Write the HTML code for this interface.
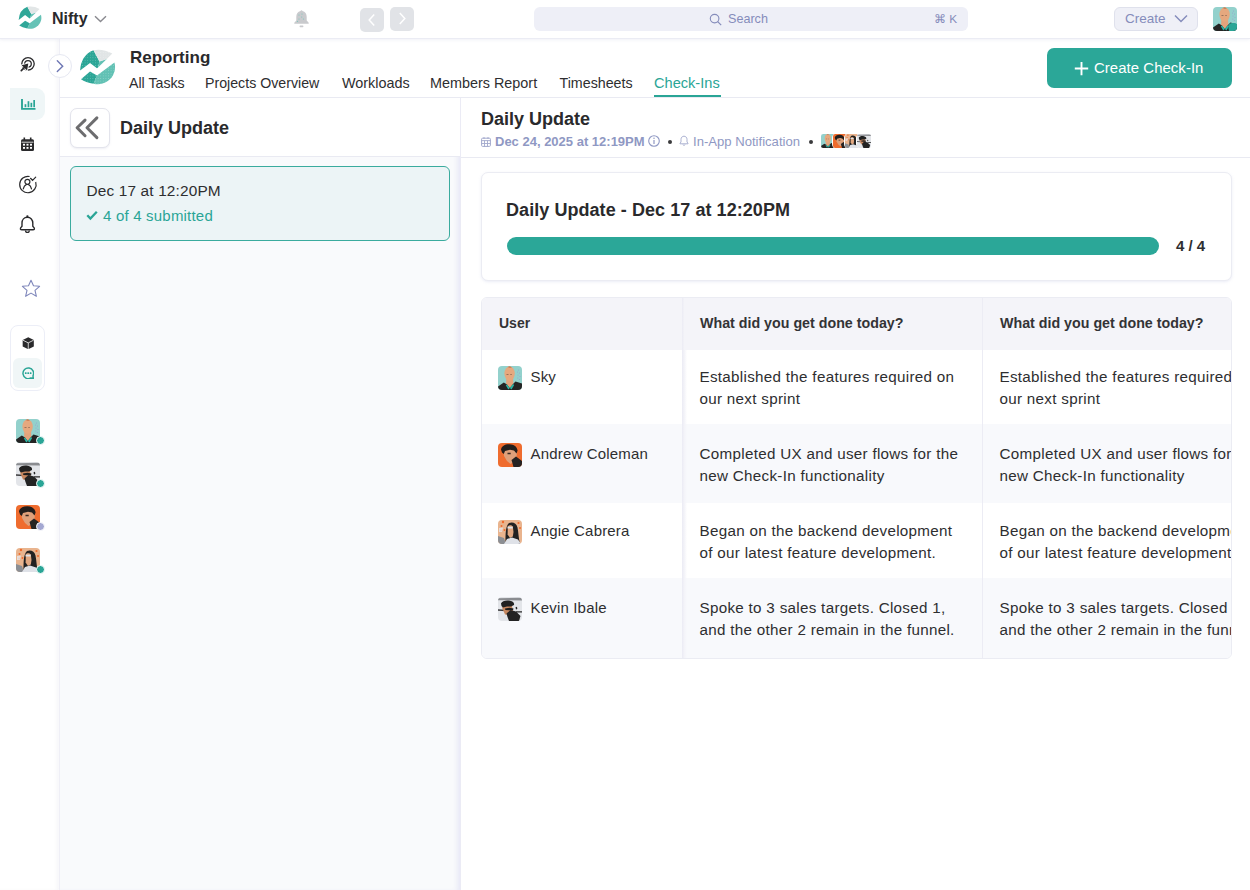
<!DOCTYPE html>
<html><head><meta charset="utf-8">
<style>
*{box-sizing:border-box;margin:0;padding:0}
html,body{width:1250px;height:890px;overflow:hidden;background:#fff;font-family:"Liberation Sans",sans-serif;color:#2e2e30}
.a{position:absolute}
.t{position:absolute;white-space:nowrap;line-height:1}
#top{left:0;top:0;width:1250px;height:39px;background:#fff;border-bottom:1px solid #ebecf4;box-shadow:0 1px 3px rgba(228,229,240,.55);z-index:4}
#side{left:0;top:39px;width:60px;height:851px;background:#fff;border-right:1px solid #efeff6;box-shadow:inset -3px 0 3px rgba(235,235,240,.35)}
#rephdr{left:60px;top:39px;width:1190px;height:59px;background:#fff;border-bottom:1px solid #e9eaf2}
#lp{left:60px;top:98px;width:401px;height:792px;background:#f9fafc;border-right:1px solid #ebebf5;box-shadow:inset -5px 0 4px -2px rgba(232,232,246,.9)}
#lph{left:0;top:0;width:400px;height:59px;background:#fff;border-bottom:1px solid #e9eaf2}
#rp{left:461px;top:98px;width:789px;height:792px;background:#fff}
#rph{left:0;top:0;width:789px;height:60px;border-bottom:1px solid #e9eaf2}
</style></head><body>

<svg width="0" height="0" style="position:absolute">
<defs>
<clipPath id="lc"><circle cx="21.4" cy="20.9" r="17.2"/></clipPath>
<pattern id="ldots" width="2.6" height="2.6" patternUnits="userSpaceOnUse"><circle cx="1.3" cy="1.3" r=".45" fill="#fff" opacity=".35"/></pattern>
<g id="logo">
<path d="M21 29.6L38.4 16.4A17.2 17.2 0 0 1 17.6 37.7Z" fill="#62c1b4"/>
<path d="M5 33.2L14 25.6L21 29.6L17.5 37.7Q9.5 36.5 5 33.2Z" fill="#2ba596"/>
<path d="M4.1 24.6Q5 9 17.5 4.2L23.5 15.5L22 21.6L21 22.2L14 16.9Z" fill="#2ba596"/>
<path d="M23.5 15.5L30.8 12.9L22 21.6Z" fill="#62c1b4"/>
<path d="M17.5 4.2Q27 2.5 36.3 7.6L30.8 12.9L23.5 15.5Z" fill="#e1e5e6"/>
<path d="M21 29.6L38.4 16.4A17.2 17.2 0 0 1 17.6 37.7Z M5 33.2L14 25.6L21 29.6L17.5 37.7Q9.5 36.5 5 33.2Z M4.1 24.6Q5 9 17.5 4.2L23.5 15.5L22 21.6L21 22.2L14 16.9Z M17.5 4.2Q27 2.5 36.3 7.6L30.8 12.9L23.5 15.5Z" fill="url(#ldots)"/>
</g>
<clipPath id="avc"><rect width="24" height="24" rx="4"/></clipPath>
<g id="av1"><g clip-path="url(#avc)"><rect width="24" height="24" fill="#93d1cc"/>
<g fill="#9d8fd0" opacity=".8"><circle cx="20.5" cy="4" r=".5"/><circle cx="19.5" cy="6" r=".5"/><circle cx="21.5" cy="7" r=".5"/><circle cx="20" cy="9" r=".5"/><circle cx="22" cy="10.5" r=".5"/><circle cx="19.8" cy="12" r=".5"/><circle cx="21.4" cy="13.5" r=".5"/></g>
<path d="M8.3 12.5H15L15.5 19.5L11.8 22L8 19.5Z" fill="#e3a37c"/>
<ellipse cx="11.6" cy="7.6" rx="5.2" ry="7.2" fill="#e6a87e"/>
<path d="M9.5 1L11.6 .3L14 1.2L12 2Z" fill="#c97a52"/>
<path d="M0 20.5L5.8 16.5L9 18.5L11.8 22L15 18L17.5 15.4L24 17.4V24H0Z" fill="#242424"/>
<path d="M9 18.5L11.8 22L10.3 23.5L7.8 19.3Z M15 18L11.8 22L13.5 23.5L16.2 19Z" fill="#2bb3a3"/>
<path d="M8.5 8.5h2M12.3 8.5h1.5" stroke="#7a5a48" stroke-width=".7"/>
</g></g>
<g id="av2"><g clip-path="url(#avc)"><rect width="24" height="24" fill="#ef6c2e"/>
<path d="M5.5 7.5L12 5.8L19 8.5L18.5 15L15 19.5L12.5 21L9 18L6 13Z" fill="#dea07a"/>
<path d="M3 6.5C3.5 3 7 1 11.5 1.2C16 1.4 19 3.5 19.6 7.5L18.5 10.5L16 7.5L12 6.8L7 8L5.8 11L4 9.5Z" fill="#221e1c"/>
<path d="M9.5 9.8h3.2v1.4h-3.2z" fill="#3a2a22"/>
<path d="M13.5 17L18 13.5L24 18V24H15.5Z" fill="#262322"/>
</g></g>
<g id="av3"><g clip-path="url(#avc)"><rect width="24" height="24" fill="#e9b48e"/>
<g fill="#ef6a2c"><circle cx="5" cy="2" r="1.2"/><circle cx="3.5" cy="6" r="1"/><circle cx="6.5" cy="10" r="1"/><circle cx="20.5" cy="3" r="1.1"/><circle cx="22" cy="8" r="1"/><circle cx="3" cy="10.5" r="1"/></g>
<path d="M0 16L6 18L8 24H0Z" fill="#8c8f94"/>
<path d="M1 8L5 7.5L4 12L1 12Z" fill="#e6e9ee" opacity=".8"/>
<path d="M7.5 24C7.5 16 7.3 6 11 3C14.5 1.5 18.5 3 19.5 7.5C20.5 12 20.5 18 22 24Z" fill="#222"/>
<path d="M9.8 6.5C10.5 4.8 13.5 4.6 14.8 6.4L15.5 12L14.8 16.5L12 18L9.6 14.5Z" fill="#e2a881"/>
<path d="M9.5 6.8L14.8 6.7L14.6 8.6L9.6 8.5Z" fill="#dfe3ea"/>
<path d="M6 24L9 19L14 17.5L20 19.5L23 24Z" fill="#dfe2e8"/>
</g></g>
<g id="av4"><g clip-path="url(#avc)"><rect width="24" height="24" fill="#e3e5e9"/>
<path d="M0 1.2L24 .8V3.5L0 3.2Z" fill="#8a8c90"/>
<path d="M0 12.3L8 12.8L8 14.3L0 13.8Z" fill="#3a3a3c"/>
<path d="M18 14.3L24 14.3V15.6L18 15.6Z" fill="#2a2a2a"/>
<path d="M4 10.5L9 8L14 9L15 14L12 18L7 17.5Z" fill="#c6875f"/>
<path d="M3 6.5C4 4 8 3 12 3.8C15 4.5 16.5 6 16 8L13 9.5L9 9.5L5 10.5L3.5 9Z" fill="#212121"/>
<path d="M7 11.6L11.5 10.8L15.5 11.5L15 13.2L11 13.3L7.3 13Z" fill="#1d1d1d"/>
<path d="M8.5 16.5L12.5 13L18 14.5L22.5 19L21 24H11L9.5 20Z" fill="#232323"/>
<path d="M17.5 10.2L19 9.8L19.3 12L18 12.5Z" fill="#262626"/>
</g></g>
</defs></svg>
<!-- TOP BAR -->
<div id="top" class="a">
  <svg class="a" style="left:15.6px;top:4.4px" width="28.6" height="27.3" viewBox="0 0 44 42"><use href="#logo"/></svg>
  <div class="t" style="left:52px;top:11px;font-size:16px;font-weight:bold;color:#2a2a2c">Nifty</div>
  <svg class="a" style="left:94px;top:15px" width="13" height="8" viewBox="0 0 13 8"><path d="M1 1.2L6.5 6.6L12 1.2" fill="none" stroke="#8a8a90" stroke-width="1.4"/></svg>
  <svg class="a" style="left:293px;top:9px" width="17" height="19" viewBox="0 0 17 19"><path d="M8.5 1.2c.6 0 .9.4.9.9 2.8.5 4.3 3 4.3 5.8v3.6l2 2.3v1H1.3v-1l2-2.3V7.9c0-2.8 1.5-5.3 4.3-5.8 0-.5.3-.9.9-.9z" fill="#c9cacd"/><rect x="6.6" y="16.6" width="3.8" height="1.6" rx=".6" fill="#c9cacd"/><g fill="#7cc6bd"><circle cx="6" cy="6" r=".6"/><circle cx="9" cy="5" r=".6"/><circle cx="8.7" cy="8" r=".6"/><circle cx="6" cy="10" r=".6"/><circle cx="10.5" cy="10" r=".6"/><circle cx="4.5" cy="12.3" r=".6"/></g></svg>
  <div class="a" style="left:360px;top:8px;width:24px;height:24px;border-radius:5px;background:#e1e3e7"></div>
  <svg class="a" style="left:360px;top:8px" width="24" height="24" viewBox="0 0 24 24"><path d="M14.2 6.6L9.2 12L14.2 17.4" fill="none" stroke="#fff" stroke-width="1.5"/></svg>
  <div class="a" style="left:390px;top:7px;width:24px;height:24px;border-radius:5px;background:#e1e3e7"></div>
  <svg class="a" style="left:390px;top:7px" width="24" height="24" viewBox="0 0 24 24"><path d="M9.8 6.1L14.8 11.5L9.8 16.9" fill="none" stroke="#fff" stroke-width="1.5"/></svg>
  <div class="a" style="left:534px;top:7px;width:434px;height:24px;border-radius:6px;background:#eeeff7"></div>
  <svg class="a" style="left:709px;top:12.5px" width="14" height="14" viewBox="0 0 14 14"><circle cx="5.6" cy="5.6" r="4.3" fill="none" stroke="#858cbb" stroke-width="1.15"/><path d="M8.7 8.7L12.2 12.2" stroke="#858cbb" stroke-width="1.2"/></svg>
  <div class="t" style="left:728px;top:13px;font-size:12.6px;color:#858cbb">Search</div>
  <div class="t" style="left:934px;top:13.5px;font-size:11.8px;color:#858cbb">&#8984; K</div>
  <div class="a" style="left:1114px;top:7px;width:84px;height:24px;border-radius:6px;background:#eff0f7;border:1px solid #dfe1ec"></div>
  <div class="t" style="left:1125px;top:12px;font-size:13.5px;color:#858cbb">Create</div>
  <svg class="a" style="left:1174px;top:14px" width="14" height="9" viewBox="0 0 14 9"><path d="M1 1.5L7 7.5L13 1.5" fill="none" stroke="#858cbb" stroke-width="1.5"/></svg>
  <svg class="a" style="left:1213px;top:7px" width="24" height="24" viewBox="0 0 24 24"><use href="#av1"/><g clip-path="url(#avc)"><rect x="15.5" y="16" width="9" height="9" rx="3.5" fill="#2aa596"/></g></svg>
</div>

<!-- SIDEBAR -->
<div id="side" class="a">
  <!-- radar -->
  <svg class="a" style="left:19px;top:16px" width="18" height="18" viewBox="0 0 18 18"><circle cx="9" cy="8.8" r="6.2" fill="none" stroke="#2a2a2c" stroke-width="1.3"/><circle cx="9" cy="8.8" r="3.3" fill="none" stroke="#2a2a2c" stroke-width="1.25"/><path d="M9.3 8.6L2.6 10.3L8.1 15.4Z" fill="none" stroke="#fff" stroke-width="1.8" stroke-linejoin="round"/><path d="M2.3 15.6L5.2 12.7" stroke="#2a2a2c" stroke-width="1.7" stroke-linecap="round"/><path d="M9.3 8.6L2.6 10.3L8.1 15.4Z" fill="#2a2a2c"/></svg>
  <!-- chart active -->
  <div class="a" style="left:10px;top:49px;width:35px;height:32px;border-radius:0 9px 9px 0;background:#eff6f7"></div>
  <svg class="a" style="left:20.5px;top:60px" width="15" height="11" viewBox="0 0 15 11"><path d="M1 0V9.9H14.5" fill="none" stroke="#2aa596" stroke-width="1.9"/><rect x="3.6" y="5.2" width="1.7" height="3" fill="#2aa596"/><rect x="6.6" y="2.2" width="1.7" height="6" fill="#2aa596"/><rect x="9.5" y="3.8" width="1.7" height="4.4" fill="#2aa596"/><rect x="12.3" y="1" width="1.7" height="7.2" fill="#2aa596"/></svg>
  <!-- calendar -->
  <svg class="a" style="left:20px;top:98px" width="15" height="15" viewBox="0 0 15 15"><rect x="1" y="2.3" width="13" height="11.7" rx="1.5" fill="#2a2a2c"/><rect x="3.5" y="0.5" width="1.6" height="3" fill="#2a2a2c"/><rect x="9.9" y="0.5" width="1.6" height="3" fill="#2a2a2c"/><path d="M1.5 5.2H13.5" stroke="#fff" stroke-width=".8"/><g fill="#fff"><rect x="3" y="6.8" width="2" height="1.8"/><rect x="6.5" y="6.8" width="2" height="1.8"/><rect x="10" y="6.8" width="2" height="1.8"/><rect x="3" y="10" width="2" height="1.8"/><rect x="6.5" y="10" width="2" height="1.8"/><rect x="10" y="10" width="2" height="1.8"/></g></svg>
  <!-- user check -->
  <svg class="a" style="left:18px;top:136px" width="20" height="19" viewBox="0 0 20 19"><path d="M17.7 7A8.2 8.2 0 1 1 11.6 1.5" fill="none" stroke="#2a2a2c" stroke-width="1.2"/><circle cx="9.4" cy="6.8" r="2.5" fill="none" stroke="#2a2a2c" stroke-width="1.2"/><path d="M5.3 13.8Q5.9 10.7 8.5 9.4M13.5 13.8Q12.9 10.7 10.3 9.4" fill="none" stroke="#2a2a2c" stroke-width="1.2" stroke-linecap="round"/><path d="M12.5 3.3L14.55 5.3L17.7 2.1" fill="none" stroke="#2a2a2c" stroke-width="1.2" stroke-linecap="round"/></svg>
  <!-- bell -->
  <svg class="a" style="left:19px;top:175px" width="17" height="20" viewBox="0 0 17 20"><path d="M8.4 3.3C5.1 3.3 3 5.9 3 9.1V12.3L1.6 13.9Q.9 15.8 2.8 15.8H14Q15.9 15.8 15.2 13.9L13.8 12.3V9.1C13.8 5.9 11.7 3.3 8.4 3.3Z" fill="none" stroke="#2a2a2c" stroke-width="1.4" stroke-linejoin="round"/><path d="M6.5 16.4A1.9 1.9 0 0 0 10.3 16.4" fill="none" stroke="#2a2a2c" stroke-width="1.3"/><circle cx="8.4" cy="2.3" r="1.15" fill="#2a2a2c"/></svg>
  <!-- star -->
  <svg class="a" style="left:21px;top:240px" width="20" height="19" viewBox="0 0 20 19"><path d="M10 1.2L12.5 6.8L18.6 7.3L14 11.3L15.4 17.3L10 14.1L4.6 17.3L6 11.3L1.4 7.3L7.5 6.8Z" fill="none" stroke="#7f87bb" stroke-width="1.1" stroke-linejoin="round"/></svg>
  <!-- group box -->
  <div class="a" style="left:10px;top:286px;width:35px;height:66px;border-radius:8px;border:1px solid #eceef7;background:#fff"></div>
  <svg class="a" style="left:21.5px;top:297.5px" width="12.5" height="12.5" viewBox="0 0 13 13"><path d="M6.5 .3L12.3 3.2V9.8L6.5 12.7L.7 9.8V3.2Z" fill="#2a2a2c"/><path d="M.9 3.3L6.5 6.1L12.1 3.3M6.5 6.1V12.6" fill="none" stroke="#fff" stroke-width=".8"/></svg>
  <div class="a" style="left:13px;top:319px;width:29px;height:30px;border-radius:6px;background:#f0f6f7"></div>
  <svg class="a" style="left:21.8px;top:327.8px" width="12.4" height="12.4" viewBox="0 0 14 14"><path d="M12.8 12.8L12.4 9.9A6 6 0 1 0 9.9 12.4Z" fill="none" stroke="#2aa596" stroke-width="1.65" stroke-linejoin="round"/><rect x="3.3" y="6" width="1.9" height="2" rx=".4" fill="#2aa596"/><rect x="6.05" y="6" width="1.9" height="2" rx=".4" fill="#2aa596"/><rect x="8.8" y="6" width="1.9" height="2" rx=".4" fill="#2aa596"/></svg>
  <!-- avatars -->
  <svg class="a" style="left:16px;top:380px" width="24" height="24" viewBox="0 0 24 24"><use href="#av1"/></svg>
  <div class="a" style="left:35.5px;top:397px;width:9px;height:9px;border-radius:50%;background:#2aa596;border:1.5px solid #fff"></div>
  <svg class="a" style="left:16px;top:423px" width="24" height="24" viewBox="0 0 24 24"><use href="#av4"/></svg>
  <div class="a" style="left:35.5px;top:440px;width:9px;height:9px;border-radius:50%;background:#2aa596;border:1.5px solid #fff"></div>
  <svg class="a" style="left:16px;top:466px" width="24" height="24" viewBox="0 0 24 24"><use href="#av2"/></svg>
  <div class="a" style="left:35.5px;top:483px;width:9px;height:9px;border-radius:50%;background:#a4a8d2;border:1.5px solid #fff"></div>
  <svg class="a" style="left:16px;top:509px" width="24" height="24" viewBox="0 0 24 24"><use href="#av3"/></svg>
  <div class="a" style="left:35.5px;top:526px;width:9px;height:9px;border-radius:50%;background:#2aa596;border:1.5px solid #fff"></div>
</div>
<!-- collapse circle -->
<div class="a" style="z-index:5;left:48px;top:54px;width:24px;height:24px;border-radius:50%;background:#fff;border:1px solid #e6e8f2"></div>
<svg class="a" style="z-index:6;left:48px;top:54px" width="24" height="24" viewBox="0 0 24 24"><path d="M9.3 6.8L14.7 12.2L9.3 17.6" fill="none" stroke="#6e77b4" stroke-width="1.4" stroke-linecap="round"/></svg>

<!-- REPORTING HEADER -->
<div id="rephdr" class="a">
  <svg class="a" style="left:16px;top:7px" width="44" height="42" viewBox="0 0 44 42"><use href="#logo"/></svg>
  <div class="t" style="left:70px;top:10px;font-size:17px;font-weight:bold;color:#2a2a2c">Reporting</div>
  <div class="t" style="left:69px;top:37px;font-size:14.2px;color:#2e2e30">All Tasks</div>
  <div class="t" style="left:145px;top:37px;font-size:14.2px;color:#2e2e30">Projects Overview</div>
  <div class="t" style="left:282px;top:37px;font-size:14.4px;color:#2e2e30">Workloads</div>
  <div class="t" style="left:370px;top:37px;font-size:14.4px;color:#2e2e30">Members Report</div>
  <div class="t" style="left:499.5px;top:37px;font-size:14.25px;color:#2e2e30">Timesheets</div>
  <div class="t" style="left:594px;top:37px;font-size:14.6px;color:#2aa596">Check-Ins</div>
  <div class="a" style="left:594px;top:56px;width:67px;height:2px;background:#2aa596"></div>
  <div class="a" style="left:987px;top:9px;width:185px;height:40px;border-radius:7px;background:#2ba798"></div>
  <svg class="a" style="left:1014px;top:22px" width="15" height="15" viewBox="0 0 15 15"><path d="M7.5 1V14.2M.8 7.5H14.2" stroke="#fff" stroke-width="1.9"/></svg>
  <div class="t" style="left:1034px;top:22px;font-size:14.9px;letter-spacing:.07px;color:#fff">Create Check-In</div>
</div>

<!-- LEFT PANEL -->
<div id="lp" class="a">
  <div id="lph" class="a">
    <div class="a" style="left:10px;top:10px;width:40px;height:40px;border-radius:7px;border:1px solid #e3e4ec;background:#fff;box-shadow:0 1px 2px rgba(200,200,220,.3)"></div>
    <svg class="a" style="left:10px;top:10px" width="40" height="40" viewBox="0 0 40 40"><path d="M15.05 12.1L7.1 19.75L15.05 27.7M26.9 9.9L17 19.75L26.9 29.6" fill="none" stroke="#6d6d6f" stroke-width="3" stroke-linecap="round" stroke-linejoin="round"/></svg>
    <div class="t" style="left:60px;top:21px;font-size:18px;font-weight:bold;color:#2a2a2c">Daily Update</div>
  </div>
  <div class="a" style="left:10px;top:68px;width:380px;height:75px;border-radius:6px;border:1px solid #3aab9e;background:#ecf4f6"></div>
  <div class="t" style="left:26.5px;top:85px;font-size:15.4px;letter-spacing:.15px;color:#2e2e30">Dec 17 at 12:20PM</div>
  <svg class="a" style="left:26px;top:112px" width="12" height="11" viewBox="0 0 12 11"><path d="M1.3 5.3L4.4 8.6L10.8 1.8" fill="none" stroke="#2aa596" stroke-width="2.3"/></svg>
  <div class="t" style="left:43px;top:110px;font-size:15px;letter-spacing:.2px;color:#2aa596">4 of 4 submitted</div>
</div>

<!-- RIGHT PANEL -->
<div id="rp" class="a">
  <div id="rph" class="a">
    <div class="t" style="left:20px;top:12px;font-size:18px;font-weight:bold;color:#2a2a2c">Daily Update</div>
    <svg class="a" style="left:20px;top:39px" width="10" height="10" viewBox="0 0 10 10"><rect x=".6" y="1.2" width="8.8" height="8.2" rx="1" fill="none" stroke="#a2a8cc" stroke-width="1"/><path d="M.6 3.6H9.4M3.5 3.6V9.4M6.5 3.6V9.4M.6 6.5H9.4M3 0V2M7 0V2" stroke="#a2a8cc" stroke-width=".9"/></svg>
    <div class="t" style="left:34px;top:37px;font-size:13px;font-weight:bold;color:#8f98c3">Dec 24, 2025 at 12:19PM</div>
    <svg class="a" style="left:187px;top:37px" width="12" height="12" viewBox="0 0 12 12"><circle cx="6" cy="6" r="5.3" fill="none" stroke="#8f98c3" stroke-width="1.1"/><path d="M6 5V9" stroke="#8f98c3" stroke-width="1.2"/><circle cx="6" cy="3.2" r=".75" fill="#8f98c3"/></svg>
    <div class="a" style="left:207px;top:41.5px;width:4px;height:4px;border-radius:50%;background:#3a3a3c"></div>
    <svg class="a" style="left:218px;top:37px" width="10" height="11" viewBox="0 0 10 11"><path d="M5 1.2c1.8 0 3 1.4 3 3.2v2.6l1 1.3v.5H1v-.5l1-1.3V4.4C2 2.6 3.2 1.2 5 1.2z" fill="none" stroke="#a2a8cc" stroke-width=".9"/><path d="M4 9.6c.2.5.5.8 1 .8s.8-.3 1-.8" fill="none" stroke="#a2a8cc" stroke-width=".9"/></svg>
    <div class="t" style="left:232px;top:37px;font-size:13.1px;color:#8f98c3">In-App Notification</div>
    <div class="a" style="left:348px;top:41.5px;width:4px;height:4px;border-radius:50%;background:#3a3a3c"></div>
    <div class="a" style="left:359px;top:35px;width:16px;height:16px;border-radius:5px;background:#fff"></div>
    <svg class="a" style="left:360px;top:36px" width="14" height="14" viewBox="0 0 24 24"><use href="#av1"/></svg>
    <div class="a" style="left:371px;top:35px;width:16px;height:16px;border-radius:5px;background:#fff"></div>
    <svg class="a" style="left:372px;top:36px" width="14" height="14" viewBox="0 0 24 24"><use href="#av2"/></svg>
    <div class="a" style="left:383px;top:35px;width:16px;height:16px;border-radius:5px;background:#fff"></div>
    <svg class="a" style="left:384px;top:36px" width="14" height="14" viewBox="0 0 24 24"><use href="#av3"/></svg>
    <div class="a" style="left:395px;top:35px;width:16px;height:16px;border-radius:5px;background:#fff"></div>
    <svg class="a" style="left:396px;top:36px" width="14" height="14" viewBox="0 0 24 24"><use href="#av4"/></svg>
  </div>
  <!-- progress card -->
  <div class="a" style="left:20px;top:74px;width:751px;height:109px;border-radius:7px;border:1px solid #ebecf3;background:#fff;box-shadow:0 1px 3px rgba(210,212,235,.45)"></div>
  <div class="t" style="left:45px;top:103px;font-size:18px;font-weight:bold;letter-spacing:.06px;color:#2a2a2c">Daily Update - Dec 17 at 12:20PM</div>
  <div class="a" style="left:46px;top:139px;width:652px;height:18px;border-radius:9px;background:#2ba798"></div>
  <div class="t" style="left:715px;top:139.5px;font-size:15px;font-weight:bold;color:#2e2e30">4 / 4</div>
  <!-- table -->
  <div class="a" id="tbl" style="left:20px;top:199px;width:751px;height:362px;border-radius:6px;border:1px solid #ebecf3;overflow:hidden;background:#fff">
    <div class="a" style="left:0;top:0;width:749px;height:52px;background:#f4f4f9"></div>
    <div class="t" style="left:17px;top:18px;font-size:14px;font-weight:bold;color:#333336">User</div>
    <div class="t" style="left:218px;top:18px;font-size:14.25px;font-weight:bold;color:#333336">What did you get done today?</div>
    <div class="t" style="left:518px;top:18px;font-size:14.25px;font-weight:bold;color:#333336">What did you get done today?</div>
    <div class="a" style="left:0;top:52px;width:749px;height:77px;background:#fff"></div>
    <svg class="a" style="left:16px;top:68px" width="24" height="24" viewBox="0 0 24 24"><use href="#av1"/></svg>
    <div class="t" style="left:48.5px;top:70.8px;font-size:15px;letter-spacing:.18px;color:#2e2e30">Sky</div>
    <div class="a" style="left:217.5px;top:67.8px;font-size:15.2px;letter-spacing:.3px;line-height:22px;color:#2e2e30;white-space:nowrap">Established the features required on<br>our next sprint</div>
    <div class="a" style="left:517.5px;top:67.8px;font-size:15.2px;letter-spacing:.3px;line-height:22px;color:#2e2e30;white-space:nowrap">Established the features required on<br>our next sprint</div>
    <div class="a" style="left:0;top:126px;width:749px;height:79px;background:#f8f9fc"></div>
    <svg class="a" style="left:16px;top:145px" width="24" height="24" viewBox="0 0 24 24"><use href="#av2"/></svg>
    <div class="t" style="left:48.5px;top:147.8px;font-size:15px;letter-spacing:.18px;color:#2e2e30">Andrew Coleman</div>
    <div class="a" style="left:217.5px;top:144.8px;font-size:15.2px;letter-spacing:.3px;line-height:22px;color:#2e2e30;white-space:nowrap">Completed UX and user flows for the<br>new Check-In functionality</div>
    <div class="a" style="left:517.5px;top:144.8px;font-size:15.2px;letter-spacing:.3px;line-height:22px;color:#2e2e30;white-space:nowrap">Completed UX and user flows for the<br>new Check-In functionality</div>
    <div class="a" style="left:0;top:206px;width:749px;height:77px;background:#fff"></div>
    <svg class="a" style="left:16px;top:222px" width="24" height="24" viewBox="0 0 24 24"><use href="#av3"/></svg>
    <div class="t" style="left:48.5px;top:224.8px;font-size:15px;letter-spacing:.18px;color:#2e2e30">Angie Cabrera</div>
    <div class="a" style="left:217.5px;top:221.8px;font-size:15.2px;letter-spacing:.3px;line-height:22px;color:#2e2e30;white-space:nowrap">Began on the backend development<br>of our latest feature development.</div>
    <div class="a" style="left:517.5px;top:221.8px;font-size:15.2px;letter-spacing:.3px;line-height:22px;color:#2e2e30;white-space:nowrap">Began on the backend development<br>of our latest feature development.</div>
    <div class="a" style="left:0;top:280px;width:749px;height:82px;background:#f8f9fc"></div>
    <svg class="a" style="left:16px;top:299px" width="24" height="24" viewBox="0 0 24 24"><use href="#av4"/></svg>
    <div class="t" style="left:48.5px;top:301.8px;font-size:15px;letter-spacing:.18px;color:#2e2e30">Kevin Ibale</div>
    <div class="a" style="left:217.5px;top:298.8px;font-size:15.2px;letter-spacing:.3px;line-height:22px;color:#2e2e30;white-space:nowrap">Spoke to 3 sales targets. Closed 1,<br>and the other 2 remain in the funnel.</div>
    <div class="a" style="left:517.5px;top:298.8px;font-size:15.2px;letter-spacing:.3px;line-height:22px;color:#2e2e30;white-space:nowrap">Spoke to 3 sales targets. Closed 1,<br>and the other 2 remain in the funnel.</div>
    <div class="a" style="left:200px;top:0;width:5px;height:360px;background:linear-gradient(90deg,#ebebf4,#f4f4f9 50%,rgba(250,250,253,0))"></div>
    <div class="a" style="left:500px;top:0;width:1px;height:360px;background:#ececf4"></div>
  </div>
</div>

</body></html>
